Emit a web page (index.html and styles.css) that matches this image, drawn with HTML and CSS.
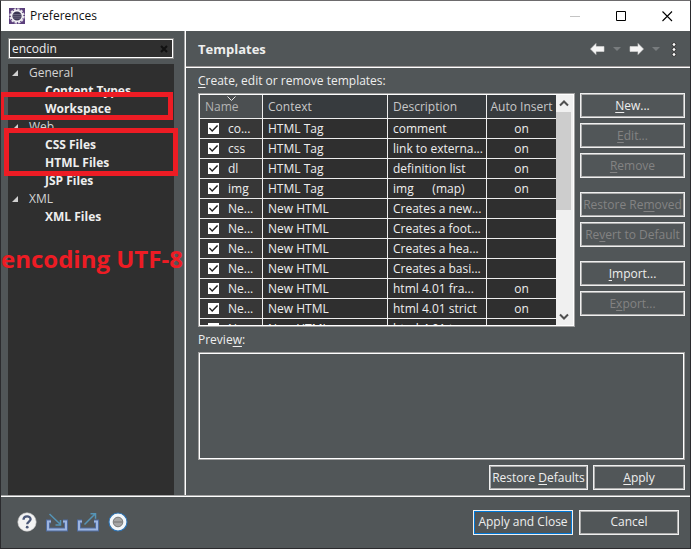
FILE: index.html
```html
<!DOCTYPE html>
<html lang="en">
<head>
<meta charset="utf-8">
<title>Preferences</title>
<link rel="stylesheet" href="styles.css">
</head>
<body>
<div class="window">
  <header class="titlebar">
    <svg class="app-icon" width="16" height="16" viewBox="0 0 16 16" aria-hidden="true">
      <rect width="16" height="16" fill="#5b3f7c"/>
      <circle cx="8" cy="8" r="6.6" fill="none" stroke="#e4e0e8" stroke-width="2.2" stroke-dasharray="2.3 1.16"/>
      <circle cx="8" cy="8" r="5.4" fill="#3b3654" stroke="#f2f0f4" stroke-width="1.6"/>
      <path d="M4 6.5h8M3.7 8.3h8.6M4.2 10.1h7.6" stroke="#77738c" stroke-width=".8"/>
    </svg>
    <span class="caption">Preferences</span>
    <div class="window-buttons">
      <button type="button" aria-label="Minimize" disabled><svg width="11" height="11" viewBox="0 0 11 11"><path d="M0 5.5h10" stroke="#c4c4c4"/></svg></button>
      <button type="button" aria-label="Maximize"><svg width="11" height="11" viewBox="0 0 11 11"><path d="M.5.5h9v9h-9z" fill="none" stroke="#000"/></svg></button>
      <button type="button" aria-label="Close"><svg width="11" height="11" viewBox="0 0 11 11"><path d="M.5.5l9.500 9.500M10 .5L.5 10" fill="none" stroke="#000" stroke-width="1.1"/></svg></button>
    </div>
  </header>

  <div class="main">
    <nav class="sidebar">
      <div class="search">
        <input type="text" value="encodin" aria-label="Filter">
        <button type="button" aria-label="Clear"><svg width="8" height="8" viewBox="0 0 8 8"><path d="M1 1l6 6M7 1L1 7" stroke="#111" stroke-width="2"/></svg></button>
      </div>
      <ul class="tree">
        <li class="group">General</li>
        <li class="leaf">Content Types</li>
        <li class="leaf">Workspace</li>
        <li class="group">Web</li>
        <li class="leaf">CSS Files</li>
        <li class="leaf">HTML Files</li>
        <li class="leaf">JSP Files</li>
        <li class="group">XML</li>
        <li class="leaf">XML Files</li>
      </ul>
      <div class="mark mark-workspace"></div>
      <div class="mark mark-files"></div>
      <p class="note">encoding UTF-8</p>
    </nav>

    <main class="page">
      <div class="page-head">
        <h1>Templates</h1>
        <button type="button" class="tool" aria-label="Back"><svg width="15" height="12" viewBox="0 0 15 12"><path d="M.5 6L6 .5V3.500h8v5H6v3z" fill="#f5f5f5" stroke="#d5d5d5" stroke-width=".6"/></svg></button>
        <button type="button" class="tool" aria-label="Back history"><svg width="8" height="4" viewBox="0 0 8 4"><path d="M0 0h8L4 4z" fill="#787c7e"/></svg></button>
        <button type="button" class="tool" aria-label="Forward"><svg width="15" height="12" viewBox="0 0 15 12"><path d="M14.500 6L9 .5V3.500H1v5h8v3z" fill="#f5f5f5" stroke="#d5d5d5" stroke-width=".6"/></svg></button>
        <button type="button" class="tool" aria-label="Forward history"><svg width="8" height="4" viewBox="0 0 8 4"><path d="M0 0h8L4 4z" fill="#787c7e"/></svg></button>
        <button type="button" class="tool menu" aria-label="Menu"><svg width="6" height="15" viewBox="0 0 6 15"><g fill="#fff" stroke="#303030" stroke-width="1"><circle cx="3" cy="2.500" r="1.900"/><circle cx="3" cy="7.500" r="1.900"/><circle cx="3" cy="12.500" r="1.900"/></g></svg></button>
      </div>

      <div class="page-body">
        <p class="label"><u>C</u>reate, edit or remove templates:</p>
        <div class="templates">
          <div class="frame grid-frame">
            <div class="grid-view">
              <table>
                <colgroup><col class="c-name"><col class="c-context"><col><col class="c-auto"></colgroup>
                <thead>
                  <tr>
                    <th class="sorted">Name<svg class="sort" width="9" height="5" viewBox="0 0 9 5" aria-hidden="true"><path d="M.5.5l4 4 4-4" fill="none" stroke="#e8e8e8"/></svg></th>
                    <th>Context</th><th>Description</th><th>Auto Insert</th>
                  </tr>
                </thead>
                <tbody>
                  <tr><td><label><input type="checkbox" checked>co...</label></td><td>HTML Tag</td><td>comment</td><td>on</td></tr>
                  <tr><td><label><input type="checkbox" checked>css</label></td><td>HTML Tag</td><td>link to externa...</td><td>on</td></tr>
                  <tr><td><label><input type="checkbox" checked>dl</label></td><td>HTML Tag</td><td>definition list</td><td>on</td></tr>
                  <tr><td><label><input type="checkbox" checked>img</label></td><td>HTML Tag</td><td>img &nbsp; &nbsp; &nbsp;(map)</td><td>on</td></tr>
                  <tr><td><label><input type="checkbox" checked>Ne...</label></td><td>New HTML</td><td>Creates a new...</td><td></td></tr>
                  <tr><td><label><input type="checkbox" checked>Ne...</label></td><td>New HTML</td><td>Creates a foot...</td><td></td></tr>
                  <tr><td><label><input type="checkbox" checked>Ne...</label></td><td>New HTML</td><td>Creates a hea...</td><td></td></tr>
                  <tr><td><label><input type="checkbox" checked>Ne...</label></td><td>New HTML</td><td>Creates a basi...</td><td></td></tr>
                  <tr><td><label><input type="checkbox" checked>Ne...</label></td><td>New HTML</td><td>html 4.01 fra...</td><td>on</td></tr>
                  <tr><td><label><input type="checkbox" checked>Ne...</label></td><td>New HTML</td><td>html 4.01 strict</td><td>on</td></tr>
                  <tr><td><label><input type="checkbox" checked>Ne...</label></td><td>New HTML</td><td>html 4.01 tra...</td><td>on</td></tr>
                </tbody>
              </table>
            </div>
            <div class="scrollbar">
              <svg width="16" height="17" viewBox="0 0 16 17"><path d="M4 10.500l4-4 4 4" fill="none" stroke="#505050" stroke-width="2"/></svg>
              <div class="thumb"></div>
              <svg class="down" width="16" height="17" viewBox="0 0 16 17"><path d="M4 6.500l4 4 4-4" fill="none" stroke="#505050" stroke-width="2"/></svg>
            </div>
          </div>
          <div class="actions">
            <button type="button" class="btn"><u>N</u>ew...</button>
            <button type="button" class="btn" disabled><u>E</u>dit...</button>
            <button type="button" class="btn" disabled><u>R</u>emove</button>
            <button type="button" class="btn section" disabled>Restore Re<u>m</u>oved</button>
            <button type="button" class="btn" disabled>Re<u>v</u>ert to Default</button>
            <button type="button" class="btn section"><u>I</u>mport...</button>
            <button type="button" class="btn" disabled>E<u>x</u>port...</button>
          </div>
        </div>
        <label class="label preview-label" for="preview">Previe<u>w</u>:</label>
        <textarea id="preview" class="frame preview" readonly></textarea>
        <div class="apply-row">
          <button type="button" class="btn restore">Restore <u>D</u>efaults</button>
          <button type="button" class="btn apply"><u>A</u>pply</button>
        </div>
      </div>
    </main>
  </div>

  <footer class="footer">
    <button type="button" class="tool" aria-label="Help"><svg width="20" height="20" viewBox="0 0 20 20"><circle cx="10" cy="10" r="9.200" fill="#f3f3f3" stroke="#c9c9c9" stroke-width=".6"/><path d="M6.500 7.800C6.500 3.200 13.700 3.300 13.600 7.300C13.500 9.500 10.200 9.800 10.200 12.300" fill="none" stroke="#4b5878" stroke-width="2.300"/><circle cx="10.200" cy="15.200" r="1.400" fill="#4b5878"/></svg></button>
    <button type="button" class="tool" aria-label="Import preferences"><svg width="22" height="20" viewBox="0 0 22 20"><path d="M5 9.500H2v8h18v-8h-3" fill="none" stroke="#4e6b9f" stroke-width="4"/><path d="M5 9.500H2v8h18v-8h-3" fill="none" stroke="#9db5e0" stroke-width="2"/><path d="M3.500 2L14 12M14.500 8v5H9.500" fill="none" stroke="#5594b6" stroke-width="1.500"/></svg></button>
    <button type="button" class="tool" aria-label="Export preferences"><svg width="22" height="20" viewBox="0 0 22 20"><path d="M5 9.500H2v8h18v-8h-3" fill="none" stroke="#4e6b9f" stroke-width="4"/><path d="M5 9.500H2v8h18v-8h-3" fill="none" stroke="#9db5e0" stroke-width="2"/><path d="M7.500 12.500L18 2M13.500 1.800h5v5" fill="none" stroke="#5594b6" stroke-width="1.500"/></svg></button>
    <button type="button" class="tool" aria-label="Record preferences"><svg width="20" height="20" viewBox="0 0 20 20"><circle cx="10" cy="10" r="9" fill="#f3f7fa" stroke="#2e74b5" stroke-width="1.100"/><circle cx="10" cy="10" r="4.800" fill="#a5a5a5" stroke="#777"/><path d="M6 10h8" stroke="#8b8b8b" stroke-width="2"/></svg></button>
    <span class="spacer"></span>
    <button type="button" class="btn default">Apply and Close</button>
    <button type="button" class="btn">Cancel</button>
  </footer>
</div>
</body>
</html>
```
FILE: styles.css
```css
* { box-sizing: border-box; }

body {
  margin: 0;
  font: 12px/18px "Open Sans", "Noto Sans", sans-serif;
  color: #eeeeee;
}

h1, p, ul { margin: 0; padding: 0; }
button, input, textarea { font: inherit; color: inherit; }
u { text-decoration: underline; text-underline-offset: 2px; }
svg { display: block; }

.window {
  display: flex;
  flex-direction: column;
  height: 100vh;
  background: #515658;
  border: 1px solid #2b2b2e;
  border-top-color: #6d6b6d;
  overflow: hidden;
}

/* Title bar */
.titlebar {
  display: flex;
  align-items: center;
  flex: none;
  height: 30px;
  padding-left: 8px;
  background: #fff;
  color: #111;
}
.caption { margin-left: 5px; }
.window-buttons { display: flex; margin-left: auto; }
.window-buttons button {
  display: grid;
  place-items: center;
  width: 46px;
  height: 30px;
  padding: 0;
  border: 0;
  background: none;
}

.main { display: flex; flex: 1; min-height: 0; }

/* Sidebar */
.sidebar {
  position: relative;
  display: flex;
  flex-direction: column;
  gap: 5px;
  flex: none;
  width: 185px;
  padding: 7px 11px 0 7px;
  border-right: 1px solid #fff;
  box-shadow: inset -1px 0 #a5a5a5;
}
.search {
  display: flex;
  align-items: center;
  height: 21px;
  border: 1px solid #858585;
  outline: 1px solid #fff;
  outline-offset: -2px;
  background: #2f2f2f;
}
.search input {
  flex: 1;
  min-width: 0;
  height: 17px;
  padding: 0 3px;
  border: 0;
  outline: 0;
  background: none;
}
.search button { padding: 0 5px; border: 0; background: none; }
.tree { flex: 1; background: #2f2f2f; list-style: none; }
.tree li { height: 18px; }
.group { display: flex; align-items: center; gap: 11px; padding-left: 4px; color: #d4d4d4; }
.group::before {
  content: "";
  width: 6px;
  height: 6px;
  background: #d0d0d0;
  clip-path: polygon(100% 0, 100% 100%, 0 100%);
}
.leaf { padding-left: 37px; font-weight: bold; }

/* Annotations drawn over the tree */
.mark { position: absolute; border: 5px solid #ed1c24; }
.mark-workspace { left: -2px; top: 61px; width: 174px; height: 28px; }
.mark-files { left: 3px; top: 97px; width: 174px; height: 48px; }
.note {
  position: absolute;
  left: 0;
  top: 213px;
  font-size: 24px;
  line-height: 30px;
  font-weight: bold;
  color: #ed1c24;
  white-space: nowrap;
}

/* Page */
.page { display: flex; flex-direction: column; flex: 1; min-width: 0; }
.page-head {
  display: flex;
  align-items: center;
  gap: 8px;
  height: 37px;
  padding: 0 13px 0 12px;
  border-bottom: 1px solid #fff;
  box-shadow: inset 0 -1px #a09c9c;
}
.page-head h1 { flex: 1; font-size: 13px; line-height: 18px; }
.tool { padding: 0; border: 0; background: none; }
.menu { margin-left: 3px; }

.page-body {
  display: flex;
  flex-direction: column;
  flex: 1;
  min-height: 0;
  padding: 4px 5px 5px 12px;
}
.label { height: 21px; }
.templates { display: flex; gap: 5px; flex: 1; min-height: 0; }

.frame {
  border: 1px solid #a0a0a0;
  outline: 1px solid #fff;
  outline-offset: -2px;
}
.grid-frame { display: flex; flex: 1; min-width: 0; padding: 1px; background: #2f2f2f; }
.grid-view { flex: 1; min-width: 0; overflow: hidden; }

table { width: 100%; table-layout: fixed; border-collapse: separate; border-spacing: 0; }
.c-name { width: 63px; }
.c-context { width: 125px; }
.c-auto { width: 69px; }
th, td {
  padding: 0 5px;
  height: 20px;
  line-height: 18px;
  border-right: 1px solid #eee;
  border-bottom: 1px solid #eee;
  text-align: left;
  font-weight: normal;
  white-space: nowrap;
  overflow: hidden;
}
th { position: relative; height: 24px; background: #373b3e; color: #c8c8c8; }
.sorted { background: #4b4f51; color: #b4b4b4; }
.sort { position: absolute; left: 27px; top: 1px; }
th:last-child, td:last-child { padding: 0; text-align: center; border-right: 0; }
td:first-child { padding-left: 8px; background: #373737; }
td label { display: flex; align-items: center; gap: 9px; }
input[type="checkbox"] {
  appearance: none;
  flex: none;
  width: 11px;
  height: 11px;
  margin: 0;
  background: #fff;
}
input[type="checkbox"]:checked::before {
  content: "";
  display: block;
  width: 11px;
  height: 11px;
  background: #222;
  clip-path: polygon(9% 50%, 17% 41%, 38% 63%, 82% 18%, 92% 27%, 38% 81%);
}

.scrollbar { display: flex; flex-direction: column; width: 17px; background: #f0f0f0; }
.thumb { height: 98px; background: #cdcdcd; margin-right: 2px; }
.down { margin-top: auto; }

/* Buttons */
.btn {
  height: 25px;
  padding: 0;
  border: 1px solid #f0f0f0;
  box-shadow: inset 0 0 0 1px #adadad;
  background: #515658;
  text-align: center;
  white-space: nowrap;
}
.btn:disabled { color: #838383; }
.actions { display: flex; flex-direction: column; gap: 5px; width: 105px; }
.section { margin-top: 9px; }

.preview-label { margin-top: 4px; }
.preview { display: block; width: 100%; height: 108px; padding: 4px; background: none; resize: none; }
.apply-row { display: flex; justify-content: flex-end; gap: 5px; margin-top: 5px; }
.restore { width: 99px; }
.apply { width: 92px; }

/* Footer */
.footer {
  display: flex;
  align-items: center;
  gap: 9px;
  flex: none;
  height: 53px;
  padding: 0 11px 0 16px;
  border-top: 1px solid #a5a5a5;
  box-shadow: inset 0 1px #fff;
}
.spacer { flex: 1; }
.footer .btn { width: 100px; }
.footer .default { margin-right: -3px; box-shadow: inset 0 0 0 1px #0078d7; }
```
